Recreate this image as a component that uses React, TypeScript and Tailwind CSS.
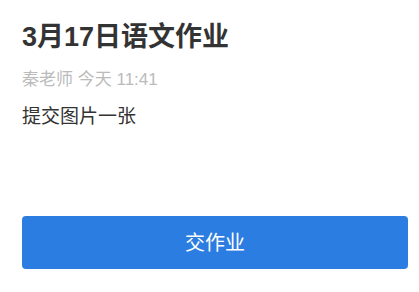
export default function App() {
  return (
    <div className="min-h-screen bg-white pl-[22px] pr-[11px] pt-[20px] font-['Liberation_Sans','Noto_Sans_CJK_SC',sans-serif]">
      <h1 className="text-[27px] font-bold leading-[34px] text-[#333333]">3月17日语文作业</h1>
      <p className="mt-[15px] text-[17px] leading-[22px] text-[#bbbbbb]">秦老师 今天 11:41</p>
      <p className="mt-[13px] text-[19px] leading-[26px] text-[#333333]">提交图片一张</p>
      <button
        type="button"
        className="mt-[86px] flex h-[53px] w-full items-center justify-center rounded-[4px] bg-[#2b7de1] text-[20px] text-white"
      >
        交作业
      </button>
    </div>
  );
}
